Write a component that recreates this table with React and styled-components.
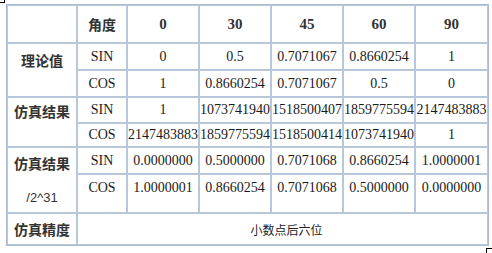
import * as React from "react"
import styled, { createGlobalStyle } from "styled-components"

const GlobalStyle = createGlobalStyle`
  html, body {
    margin: 0;
    padding: 0;
    background: #ffffff;
  }
`

const angles = ["0", "30", "45", "60", "90"]

const groups = [
  {
    label: ["理论值"],
    pad: 6,
    rows: [
      { name: "SIN", height: 27, values: ["0", "0.5", "0.7071067", "0.8660254", "1"] },
      { name: "COS", height: 27, values: ["1", "0.8660254", "0.7071067", "0.5", "0"] },
    ],
  },
  {
    label: ["仿真结果"],
    pad: 3,
    rows: [
      { name: "SIN", height: 26, values: ["1", "1073741940", "1518500407", "1859775594", "2147483883"] },
      { name: "COS", height: 24, values: ["2147483883", "1859775594", "1518500414", "1073741940", "1"] },
    ],
  },
  {
    label: ["仿真结果", "/2^31"],
    pad: 5,
    rows: [
      { name: "SIN", height: 27, values: ["0.0000000", "0.5000000", "0.7071068", "0.8660254", "1.0000001"] },
      { name: "COS", height: 39, values: ["1.0000001", "0.8660254", "0.7071068", "0.5000000", "0.0000000"], top: 5 },
    ],
  },
]

const widths = [70, 50, 72, 72, 72, 72, 73]

export default function App() {
  return (
    <Page>
      <GlobalStyle />
      <CornerTopLeft />
      <Grid>
        <colgroup>
          {widths.map((w, i) => (
            <col key={i} style={{ width: w }} />
          ))}
        </colgroup>
        <tbody>
          <Row $h={38}>
            <Cell />
            <HeadCell>角度</HeadCell>
            {angles.map((a) => (
              <AngleCell key={a}>{a}</AngleCell>
            ))}
          </Row>
          {groups.map((g, gi) =>
            g.rows.map((r, ri) => (
              <Row key={gi + "-" + ri} $h={r.height}>
                {ri === 0 && (
                  <LabelCell rowSpan={g.rows.length} $pad={g.pad}>
                    <Label>{g.label[0]}</Label>
                    {g.label[1] && <SubLabel>{g.label[1]}</SubLabel>}
                  </LabelCell>
                )}
                <DataCell $top={r.top}>{r.name}</DataCell>
                {r.values.map((v, vi) => (
                  <DataCell key={vi} $top={r.top}>
                    {v}
                  </DataCell>
                ))}
              </Row>
            ))
          )}
          <Row $h={32}>
            <LabelCell $pad={0} $middle>
              <Label>仿真精度</Label>
            </LabelCell>
            <NoteCell colSpan={6}>小数点后六位</NoteCell>
          </Row>
        </tbody>
      </Grid>
      <CornerBottomRight />
    </Page>
  )
}

const Page = styled.div`
  position: relative;
  width: 492px;
  height: 253px;
  padding: 4px 0 0 6px;
  box-sizing: border-box;
`

const Grid = styled.table`
  table-layout: fixed;
  width: 483px;
  border-collapse: separate;
  border-spacing: 0;
  border: 1px solid #a9bbd4;
  background: #ffffff;
`

const Row = styled.tr`
  height: ${(p) => p.$h}px;
`

const Cell = styled.td`
  box-sizing: border-box;
  border: 1px solid #b7c7dc;
  padding: 0;
  text-align: center;
  vertical-align: middle;
  white-space: nowrap;
  color: #1a1a1a;
`

const HeadCell = styled(Cell)`
  font-family: "Noto Sans CJK SC", "Liberation Sans", sans-serif;
  font-weight: 700;
  font-size: 14px;
  color: #333333;
`

const AngleCell = styled(Cell)`
  font-family: "Liberation Serif", serif;
  font-weight: 700;
  font-size: 15px;
  color: #333333;
`

const DataCell = styled(Cell)`
  font-family: "Liberation Serif", serif;
  font-size: 14px;
  vertical-align: ${(p) => (p.$top ? "top" : "middle")};
  padding-top: ${(p) => (p.$top ? p.$top + "px" : "0")};
`

const LabelCell = styled(Cell)`
  vertical-align: ${(p) => (p.$middle ? "middle" : "top")};
  padding-top: ${(p) => p.$pad}px;
`

const Label = styled.div`
  font-family: "Noto Sans CJK SC", "Liberation Sans", sans-serif;
  font-weight: 700;
  font-size: 14px;
  line-height: 20px;
  color: #333333;
`

const SubLabel = styled.div`
  margin-top: 15px;
  font-family: "Liberation Sans", sans-serif;
  font-size: 13px;
  line-height: 20px;
  color: #333333;
`

const NoteCell = styled(Cell)`
  font-family: "Noto Sans CJK SC", "Liberation Sans", sans-serif;
  font-size: 12px;
  color: #222222;
  padding-left: 8px;
`

const CornerTopLeft = styled.div`
  position: absolute;
  left: 0;
  top: 0;
  width: 4px;
  height: 2px;
  border-right: 1px solid #000;
  border-bottom: 1px solid #000;
`

const CornerBottomRight = styled.div`
  position: absolute;
  left: 486px;
  top: 248px;
  width: 6px;
  height: 5px;
  border-left: 1px solid #000;
  border-top: 1px solid #000;
`
